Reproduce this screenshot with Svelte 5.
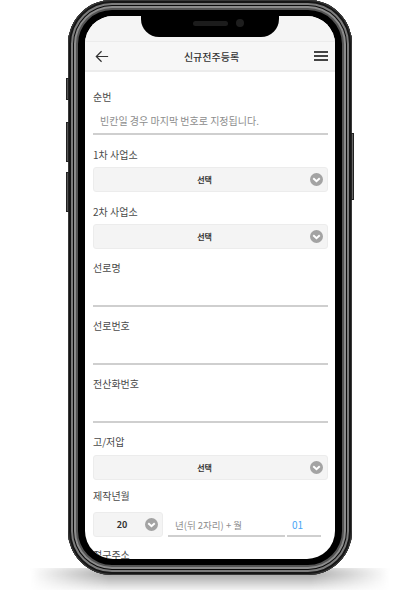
<script lang="ts">
	const years = '20';
</script>

{#snippet chevron()}
	<svg class="chev" viewBox="0 0 12 12" aria-hidden="true">
		<circle cx="6" cy="6" r="6" fill="#a3a3a3" />
		<path d="M3 4.8 L6 7.6 L9 4.8" fill="none" stroke="#fff" stroke-width="1.8" />
	</svg>
{/snippet}

{#snippet select(text: string, cls = '')}
	<div class="select {cls}">
		<span>{text}</span>
		{@render chevron()}
	</div>
{/snippet}

<div class="stage">
	<div class="phone">
		<span class="btn left-a"></span>
		<span class="btn left-b"></span>
		<span class="btn left-c"></span>
		<span class="btn right-a"></span>

		<div class="screen">
			<div class="status"></div>
			<header class="bar">
				<svg class="back" viewBox="0 0 16 14" aria-hidden="true">
					<path d="M15 7 H1.5 M7.5 1 L1.5 7 L7.5 13" fill="none" stroke="#333" stroke-width="1.4" />
				</svg>
				<h1>신규전주등록</h1>
				<div class="menu"><i></i><i></i><i></i></div>
			</header>

			<main class="form">
				<div class="label first">순번</div>
				<div class="input hint">빈칸일 경우 마지막 번호로 지정됩니다.</div>

				<div class="label s1">1차 사업소</div>
				{@render select('선택')}

				<div class="label s1">2차 사업소</div>
				{@render select('선택')}

				<div class="label t1">선로명</div>
				<div class="input"></div>

				<div class="label t2">선로번호</div>
				<div class="input"></div>

				<div class="label t2">전산화번호</div>
				<div class="input"></div>

				<div class="label t2">고/저압</div>
				{@render select('선택', 'wide-gap')}

				<div class="label t4">제작년월</div>
				<div class="date">
					<div class="select year">
						<span>{years}</span>
						{@render chevron()}
					</div>
					<div class="input ym">년(뒤 2자리) + 월</div>
					<div class="input mon">01</div>
				</div>

				<div class="label t5">접구주소</div>
			</main>

			<div class="notch">
				<span class="speaker"></span>
				<span class="camera"></span>
			</div>
		</div>
	</div>
	<div class="ground"></div>
</div>

<style>
	:global(body) {
		margin: 0;
		background: #fff;
		font-family: "Noto Sans CJK KR", "Liberation Sans", sans-serif;
	}
	.stage {
		width: 420px;
		height: 610px;
		overflow: hidden;
		position: relative;
	}
	.phone {
		position: relative;
		z-index: 1;
		box-sizing: border-box;
		width: 284px;
		height: 575px;
		margin-left: 68px;
		padding: 16px 17px;
		border-radius: 44px;
		background: #000;
		box-shadow:
			inset 0 0 0 1px #3a3a3a,
			inset 0 0 0 3px #161616,
			inset 0 0 0 5px #7c7c7c,
			inset 0 0 0 6px #0c0c0c,
			inset 0 0 0 8px #8c8c8c,
			inset 0 0 0 10px #555,
			inset 0 0 0 11px #000;
	}
	.btn {
		position: absolute;
		width: 3px;
		background: #555;
		border: 1px solid #222;
		box-sizing: border-box;
	}
	.left-a { left: -2px; top: 78px; height: 22px; }
	.left-b { left: -2px; top: 122px; height: 40px; }
	.left-c { left: -2px; top: 172px; height: 40px; }
	.right-a { right: -2px; top: 133px; height: 67px; background: #666; }

	.screen {
		position: relative;
		height: 543px;
		background: #fff;
		border-radius: 28px;
		overflow: hidden;
	}
	.notch {
		position: absolute;
		left: 56px;
		top: 0;
		width: 138px;
		height: 21px;
		background: #000;
		border-radius: 0 0 18px 18px;
	}
	.speaker {
		position: absolute;
		left: 52px;
		top: 5px;
		width: 35px;
		height: 5px;
		border-radius: 3px;
		background: #1c1c1c;
	}
	.camera {
		position: absolute;
		left: 95px;
		top: 3px;
		width: 8px;
		height: 8px;
		border-radius: 50%;
		background: #1e1e1e;
	}
	.status {
		height: 25px;
		background: #f5f5f5;
		border-bottom: 1px solid #ececec;
	}
	.bar {
		box-sizing: border-box;
		height: 30px;
		display: flex;
		align-items: center;
		justify-content: space-between;
		padding: 0 7px 0 10px;
		background: #f7f7f7;
		border-bottom: 2px solid #ececec;
	}
	.back {
		width: 14px;
		height: 13px;
	}
	h1 {
		margin: 0;
		font-size: 10px;
		font-weight: 500;
		color: #333;
	}
	.menu {
		display: flex;
		flex-direction: column;
		gap: 2.5px;
		width: 14px;
	}
	.menu i {
		display: block;
		height: 1.5px;
		background: #444;
	}
	.form {
		padding: 0 7px 0 8px;
	}
	.label {
		font-size: 10px;
		line-height: 14px;
		color: #4a4a4a;
	}
	.first { margin-top: 18px; }
	.s1 { margin-top: 13px; }
	.t1 { margin-top: 12px; }
	.t2 { margin-top: 12px; }
	.t4 { margin-top: 9px; }
	.t5 { margin-top: 11px; }
	.input {
		box-sizing: border-box;
		height: 32px;
		padding: 5px 0 0 7px;
		border-bottom: 2px solid #cfcfcf;
		font-size: 10px;
		line-height: 20px;
	}
	.hint {
		height: 31px;
		padding-top: 7px;
		color: #8d8d8d;
	}
	.select {
		box-sizing: border-box;
		position: relative;
		height: 25px;
		margin-top: 5px;
		padding-right: 12px;
		display: flex;
		align-items: center;
		justify-content: center;
		background: #f4f4f4;
		border: 1px solid #ececec;
		border-radius: 3px;
		font-size: 8px;
		font-weight: 700;
		color: #333;
	}
	.wide-gap {
		margin-top: 6px;
	}
	.chev {
		position: absolute;
		right: 4px;
		top: 5px;
		width: 13px;
		height: 13px;
	}
	.date {
		display: flex;
		margin-top: 9px;
		height: 25px;
	}
	.year {
		width: 70px;
		margin: 0 5px 0 0;
		padding-right: 12px;
		flex: none;
	}
	.year span {
		font-size: 9px;
	}
	.ym {
		width: 117px;
		height: 25px;
		padding: 0 0 0 7px;
		font-size: 9.5px;
		line-height: 26px;
		color: #8d8d8d;
		flex: none;
		margin-right: 2px;
	}
	.mon {
		width: 34px;
		height: 25px;
		padding: 0 0 0 5px;
		line-height: 26px;
		color: #49a5f5;
		flex: none;
	}
	.ground {
		position: absolute;
		left: 30px;
		top: 568px;
		width: 360px;
		height: 22px;
		background: linear-gradient(to bottom, #8a8a8a, #f4f4f4);
		filter: blur(4px);
		mask-image: linear-gradient(to right, transparent, #000 22%, #000 78%, transparent);
	}
</style>
